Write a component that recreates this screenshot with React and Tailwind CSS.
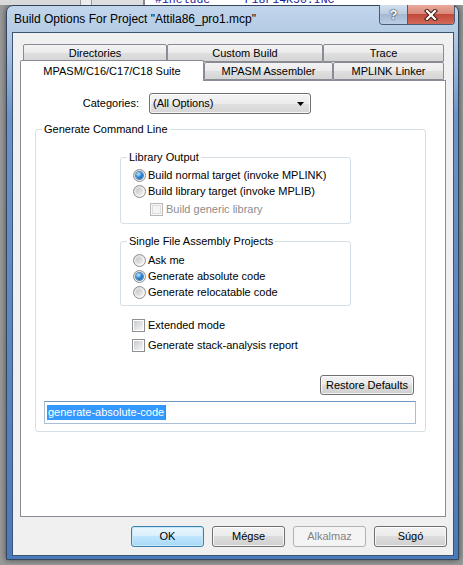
import React from 'react';

// Win7-style push button
function DlgButton({ children, primary, disabled, className = '' }) {
  let look =
    'border-[#707070] text-black bg-[linear-gradient(#f2f2f2,#ebebeb_45%,#dddddd_50%,#cfcfcf)] shadow-[inset_0_0_0_1px_rgba(255,255,255,0.75)]';
  if (primary)
    look =
      'border-[#3c7fb1] text-black bg-[linear-gradient(#eaf6fd,#d9f0fc_45%,#bee6fd_50%,#a7d9f5)] shadow-[inset_0_0_0_1px_#c6e8fa]';
  if (disabled) look = 'border-[#adb2b5] text-[#838383] bg-[#f4f4f4]';
  return (
    <button className={`rounded-[3px] border leading-none ${look} ${className}`}>
      {children}
    </button>
  );
}

function Radio({ checked, children }) {
  return (
    <div className="flex items-center h-[16px]">
      <span className="w-[13px] h-[13px] rounded-full border border-[#8e8f8f] bg-[linear-gradient(135deg,#d6d6d6,#ffffff)] flex items-center justify-center">
        {checked ? (
          <span className="w-[7px] h-[7px] rounded-full bg-[radial-gradient(circle_at_35%_30%,#c9ecff,#2a8ae0_45%,#0b4b91)] shadow-[0_0_0_1px_#5e88b3]" />
        ) : (
          <span className="w-[7px] h-[7px] rounded-full bg-[linear-gradient(135deg,#c4c4c4,#f2f2f2)]" />
        )}
      </span>
      <span className="ml-[2px]">{children}</span>
    </div>
  );
}

function Check({ disabled, children, className = '' }) {
  return (
    <div className={`flex items-center h-[16px] ${className}`}>
      <span
        className={`w-[13px] h-[13px] border p-[1px] ${
          disabled ? 'border-[#b7b7b7] bg-[#f7f7f7]' : 'border-[#8e8f8f] bg-white'
        }`}
      >
        <span
          className={`block w-full h-full ${
            disabled
              ? 'bg-[#f4f4f4] border border-[#dedede]'
              : 'bg-[linear-gradient(135deg,#c7cad0,#f7f7f7)]'
          }`}
        />
      </span>
      <span className={`ml-[3px] ${disabled ? 'text-[#8d8d8d]' : ''}`}>{children}</span>
    </div>
  );
}

// group box; padding goes on the inner div so the legend stays put
function Group({ title, className = '', inner = '', children }) {
  return (
    <fieldset className={`border border-[#d5dfe5] rounded-[3px] ${className}`}>
      <legend className="ml-[6px] px-[2px] leading-[13px]">{title}</legend>
      <div className={inner}>{children}</div>
    </fieldset>
  );
}

function Tab({ children, width, selected }) {
  if (selected)
    return (
      <div
        className={`${width} h-[21px] -mt-[3px] -mb-[1px] relative z-10 border border-b-0 border-[#898c95] rounded-t-[2px] bg-white flex items-center justify-center`}
      >
        {children}
      </div>
    );
  return (
    <div
      className={`${width} h-full border border-[#898c95] rounded-t-[2px] bg-[linear-gradient(#f3f3f3,#ebebeb_50%,#dfdfdf_50%,#d5d5d5)] flex items-center justify-center`}
    >
      {children}
    </div>
  );
}

export default function App() {
  return (
    <div className="w-[463px] h-[565px] overflow-hidden bg-[#9a9a9a] font-['Liberation_Sans',Arial,sans-serif] text-[11px] text-black">
      {/* editor behind the dialog */}
      <div className="h-[5px] flex">
        <div className="w-[80px] bg-[#d9d9d9]" />
        <div className="w-[1px] bg-[#9a9a9a]" />
        <div className="w-[10px] bg-[#ececec]" />
        <div className="w-[1px] bg-[#9a9a9a]" />
        <div className="w-[51px] bg-[#dedede]" />
        <div className="w-[2px] bg-[#8a8a8a]" />
        <div className="flex-1 bg-white overflow-hidden">
          <div className="-mt-[6px] pl-[10px] whitespace-pre font-['Liberation_Mono',monospace] text-[11.5px] leading-[12px] text-[#1c1ca0]">
            {'#include    "P18F14K50.INC"'}
          </div>
        </div>
      </div>

      {/* dialog window */}
      <div className="ml-[6px] w-[453px] h-[555px] rounded-t-[7px] border border-[#33465e] bg-[linear-gradient(180deg,#c2d6eb_0px,#b3cae4_30px,#6b93c8_110px,#4b7aba_100%)] shadow-[0_0_6px_rgba(0,0,0,0.55)] flex flex-col">
        <div className="h-[27px] flex justify-between items-start">
          <div className="pl-[7px] pt-[6px] text-[12px] leading-[15px] text-black">
            Build Options For Project "Attila86_pro1.mcp"
          </div>
          <div className="flex -mt-[1px] mr-[3px] h-[20px] rounded-b-[4px] border border-t-0 border-[#4a5b72] overflow-hidden">
            <div className="w-[28px] h-full flex items-center justify-center bg-[linear-gradient(#d3e0ee,#bccde2_45%,#a5b9d1_50%,#b9cde3)] border-r border-[#4a5b72]">
              <span className="text-white font-bold text-[13px] leading-none [text-shadow:0_0_1px_#1d2a3a,0_0_2px_#1d2a3a]">?</span>
            </div>
            <div className="w-[46px] h-full flex items-center justify-center bg-[linear-gradient(#e9a99c,#d98a7c_45%,#c4483a_50%,#d06a58)]">
              <svg width="14" height="12" viewBox="0 0 14 12">
                <path d="M3 2 L11 10 M11 2 L3 10" stroke="#3d1d18" strokeWidth="4.2" strokeLinecap="square" />
                <path d="M3 2 L11 10 M11 2 L3 10" stroke="#ffffff" strokeWidth="2.2" strokeLinecap="square" />
              </svg>
            </div>
          </div>
        </div>

        {/* client area */}
        <div className="flex-1 ml-[6px] mr-[5px] mb-[4px] bg-[#f0f0f0] shadow-[0_0_0_1px_#3a5578] flex flex-col pl-[7px] pt-[11px]">
          {/* two rows of tabs */}
          <div className="h-[18px] flex pl-[3px]">
            <Tab width="w-[144px]">Directories</Tab>
            <Tab width="w-[156px]">Custom Build</Tab>
            <Tab width="w-[121px]">Trace</Tab>
          </div>
          <div className="h-[18px] flex items-end">
            <Tab width="w-[184px]" selected>
              MPASM/C16/C17/C18 Suite
            </Tab>
            <Tab width="w-[129px]">MPASM Assembler</Tab>
            <Tab width="w-[111px]">MPLINK Linker</Tab>
          </div>

          {/* tab page */}
          <div className="w-[426px] h-[437px] border border-[#898c95] bg-white">
            <div className="flex items-center mt-[12px]">
              <span className="w-[118px] text-right">Categories:</span>
              <div className="ml-[10px] w-[162px] h-[21px] rounded-[3px] border border-[#707070] bg-[linear-gradient(#f4f4f4,#ececec_50%,#e0e0e0_50%,#d6d6d6)] shadow-[inset_0_0_0_1px_rgba(255,255,255,0.8)] flex items-center justify-between pl-[3px] pr-[6px]">
                <span>(All Options)</span>
                <svg width="7" height="4" viewBox="0 0 7 4">
                  <path d="M0 0 H7 L3.5 4 Z" fill="#000" />
                </svg>
              </div>
            </div>

            <Group title="Generate Command Line" className="ml-[14px] mt-[9px] w-[391px] h-[309px]">
              <Group
                title="Library Output"
                className="ml-[84px] mt-[15px] w-[231px] h-[73px]"
                inner="pl-[12px] pt-[3px]"
              >
                <Radio checked>Build normal target (invoke MPLINK)</Radio>
                <Radio>Build library target (invoke MPLIB)</Radio>
                <Check disabled className="ml-[17px] mt-[2px]">
                  Build generic library
                </Check>
              </Group>

              <Group
                title="Single File Assembly Projects"
                className="ml-[84px] mt-[11px] w-[231px] h-[71px]"
                inner="pl-[12px] pt-[4px]"
              >
                <Radio>Ask me</Radio>
                <Radio checked>Generate absolute code</Radio>
                <Radio>Generate relocatable code</Radio>
              </Group>

              <Check className="ml-[96px] mt-[11px]">Extended mode</Check>
              <Check className="ml-[96px] mt-[4px]">Generate stack-analysis report</Check>

              <div className="flex justify-end mr-[11px] mt-[22px]">
                <DlgButton className="w-[94px] h-[20px]">Restore Defaults</DlgButton>
              </div>

              <div className="ml-[8px] mt-[6px] w-[372px] h-[23px] border border-[#a9bfd6] border-t-[#7195bf] bg-white flex items-center pl-[2px]">
                <span className="bg-[#3399ff] text-white leading-[15px] px-[1px]">generate-absolute-code</span>
                <span className="w-[1px] h-[15px] bg-[#cc6600]" />
              </div>
            </Group>
          </div>

          {/* dialog buttons */}
          <div className="flex justify-end gap-[8px] mr-[6px] mt-[9px]">
            <DlgButton primary className="w-[73px] h-[21px]">OK</DlgButton>
            <DlgButton className="w-[73px] h-[21px]">Mégse</DlgButton>
            <DlgButton disabled className="w-[73px] h-[21px]">Alkalmaz</DlgButton>
            <DlgButton className="w-[73px] h-[21px]">Súgó</DlgButton>
          </div>
        </div>
      </div>
    </div>
  );
}
